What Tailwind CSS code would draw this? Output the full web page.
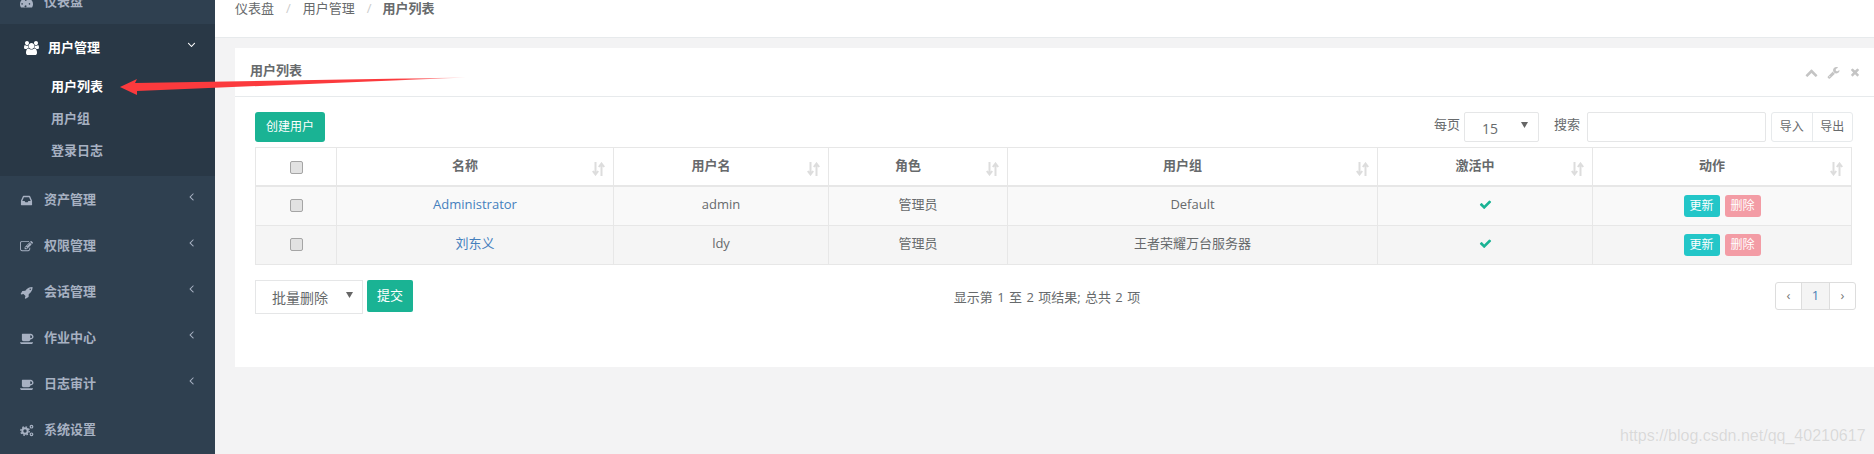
<!DOCTYPE html>
<html lang="zh">
<head>
<meta charset="utf-8">
<title>用户列表</title>
<script src="https://cdn.jsdelivr.net/npm/@tailwindcss/browser@4"></script>
</head>
<body class="bg-[#f3f3f4]">
<div class="relative flex h-[454px] w-[1874px] overflow-hidden bg-[#f3f3f4] text-[13px] text-[#676a6c] [font-family:'Open_Sans','Noto_Sans_CJK_SC',sans-serif]">

  <!-- Sidebar -->
  <nav class="w-[215px] shrink-0 bg-[#2f4050] text-[13px] font-semibold text-[#a7b1c2]">
    <div class="-mt-[22px] flex h-[46px] items-center pl-5 pt-[2px]">
      <svg class="w-[13px] h-[13px] fill-current" viewBox="0 0 1792 1792"><path d="M896 256q244 0 451 120t327 327 120 451q0 220-117 406-16 24-44 24h-1474q-28 0-44-24-117-186-117-406 0-244 120-451t327-327 451-120zm-512 832a96 96 0 1 0 0 1zm512-512a96 96 0 1 0 0 1zm512 512a96 96 0 1 0 0 1zm-512 320a128 128 0 1 0 0 1z" fill-rule="evenodd"/></svg>
      <span class="ml-[11px]">仪表盘</span>
    </div>
    <div class="h-[152px] bg-[#293846]">
      <div class="flex h-[46px] items-center pl-6 pr-[17px] pt-[2px] text-white">
        <svg class="w-[15px] h-[14px] fill-current" viewBox="0 0 1920 1792"><path d="M593 896q-162 5-265 128h-134q-82 0-138-40.5t-56-118.5q0-353 124-353 6 0 43.5 21t97.5 42.5 119 21.5q67 0 133-23-5 37-5 66 0 139 81 256zm1071 637q0 120-73 189.5t-194 69.5h-874q-121 0-194-69.5t-73-189.5q0-53 3.5-103.5t14-109 26.5-108.5 43-97.5 62-81 85.5-53.5 111.5-20q10 0 43 21.5t73 48 107 48 135 21.5 135-21.5 107-48 73-48 43-21.5q61 0 111.5 20t85.5 53.5 62 81 43 97.5 26.5 108.5 14 109 3.5 103.5zm-1024-1277q0 106-75 181t-181 75-181-75-75-181 75-181 181-75 181 75 75 181zm704 384q0 159-112.5 271.5t-271.5 112.5-271.5-112.5-112.5-271.5 112.5-271.5 271.5-112.5 271.5 112.5 112.5 271.5zm576 225q0 78-56 118.5t-138 40.5h-134q-103-123-265-128 81-117 81-256 0-29-5-66 66 23 133 23 59 0 119-21.5t97.5-42.5 43.5-21q124 0 124 353zm-128-609q0 106-75 181t-181 75-181-75-75-181 75-181 181-75 181 75 75 181z"/></svg>
        <span class="ml-[9px] flex-1">用户管理</span>
        <svg class="w-[13px] h-[13px] -mt-[8px] fill-current" viewBox="0 0 1792 1792"><path d="M1395 736q0 13-10 23l-466 466q-10 10-23 10t-23-10l-466-466q-10-10-10-23t10-23l50-50q10-10 23-10t23 10l393 393 393-393q10-10 23-10t23 10l50 50q10 10 10 23z"/></svg>
      </div>
      <div class="flex h-[32.5px] items-center pl-[51px] font-bold text-white">用户列表</div>
      <div class="flex h-[32.5px] items-center pl-[51px]">用户组</div>
      <div class="flex h-[32px] items-center pl-[51px]">登录日志</div>
    </div>
    <div class="flex h-[46px] items-center pl-5 pr-[17px] pt-[2px]">
      <svg class="w-[13px] h-[13px] fill-current" viewBox="0 0 1792 1792"><path d="M1151 960h316q-1-3-2.5-8.5t-2.5-7.5l-212-496h-708l-212 496q-1 2-2.5 7.5t-2.5 8.5h316l95 192h320zm513 30v482q0 26-19 45t-45 19h-1408q-26 0-45-19t-19-45v-482q0-62 25-123l238-552q10-25 36.5-42t52.5-17h832q26 0 52.5 17t36.5 42l238 552q25 61 25 123z"/></svg>
      <span class="ml-[11px] flex-1">资产管理</span>
      <svg class="w-[13px] h-[13px] -mt-[8px] fill-current" viewBox="0 0 1792 1792"><path d="M1203 544q0 13-10 23l-393 393 393 393q10 10 10 23t-10 23l-50 50q-10 10-23 10t-23-10l-466-466q-10-10-10-23t10-23l466-466q10-10 23-10t23 10l50 50q10 10 10 23z"/></svg>
    </div>
    <div class="flex h-[46px] items-center pl-5 pr-[17px] pt-[2px]">
      <svg class="w-[13px] h-[13px] fill-current" viewBox="0 0 1792 1792"><path d="M888 1184l116-116-152-152-116 116v56h96v96h56zm440-720q-16-16-33 1l-350 350q-17 17-1 33t33-1l350-350q17-17 1-33zm80 594v190q0 119-84.5 203.5t-203.5 84.5h-832q-119 0-203.5-84.5t-84.5-203.5v-832q0-119 84.5-203.5t203.5-84.5h832q63 0 117 25 15 7 18 23 3 17-9 29l-49 49q-14 14-32 8-23-6-45-6h-832q-66 0-113 47t-47 113v832q0 66 47 113t113 47h832q66 0 113-47t47-113v-126q0-13 9-22l64-64q15-15 35-7t20 29zm-96-738l288 288-672 672h-288v-288zm444 132l-92 92-288-288 92-92q28-28 68-28t68 28l152 152q28 28 28 68t-28 68z"/></svg>
      <span class="ml-[11px] flex-1">权限管理</span>
      <svg class="w-[13px] h-[13px] -mt-[8px] fill-current" viewBox="0 0 1792 1792"><path d="M1203 544q0 13-10 23l-393 393 393 393q10 10 10 23t-10 23l-50 50q-10 10-23 10t-23-10l-466-466q-10-10-10-23t10-23l466-466q10-10 23-10t23 10l50 50q10 10 10 23z"/></svg>
    </div>
    <div class="flex h-[46px] items-center pl-5 pr-[17px] pt-[2px]">
      <svg class="w-[13px] h-[13px] fill-current" viewBox="0 0 1792 1792"><path d="M1504 448q0-40-28-68t-68-28-68 28-28 68 28 68 68 28 68-28 28-68zm224-288q0 249-75.5 430.5t-253.5 360.5q-81 80-195 176l-20 379q-2 16-16 26l-384 224q-7 4-16 4-12 0-23-9l-64-64q-13-14-8-32l85-276-281-281-276 85q-3 1-9 1-14 0-23-9l-64-64q-17-19-5-39l224-384q10-14 26-16l379-20q96-114 176-195 188-187 358-258t431-71q14 0 24 9.5t10 22.5z"/></svg>
      <span class="ml-[11px] flex-1">会话管理</span>
      <svg class="w-[13px] h-[13px] -mt-[8px] fill-current" viewBox="0 0 1792 1792"><path d="M1203 544q0 13-10 23l-393 393 393 393q10 10 10 23t-10 23l-50 50q-10 10-23 10t-23-10l-466-466q-10-10-10-23t10-23l466-466q10-10 23-10t23 10l50 50q10 10 10 23z"/></svg>
    </div>
    <div class="flex h-[46px] items-center pl-5 pr-[17px] pt-[2px]">
      <svg class="w-[14px] h-[13px] fill-current" viewBox="0 0 1920 1792"><path d="M1664 640q0-80-56-136t-136-56h-64v384h64q80 0 136-56t56-136zm-1664 768h1792q0 106-75 181t-181 75h-1280q-106 0-181-75t-75-181zm1856-768q0 159-112.5 271.5t-271.5 112.5h-64v32q0 92-66 158t-158 66h-704q-92 0-158-66t-66-158v-736q0-26 19-45t45-19h1152q159 0 271.5 112.5t112.5 271.5z"/></svg>
      <span class="ml-[10px] flex-1">作业中心</span>
      <svg class="w-[13px] h-[13px] -mt-[8px] fill-current" viewBox="0 0 1792 1792"><path d="M1203 544q0 13-10 23l-393 393 393 393q10 10 10 23t-10 23l-50 50q-10 10-23 10t-23-10l-466-466q-10-10-10-23t10-23l466-466q10-10 23-10t23 10l50 50q10 10 10 23z"/></svg>
    </div>
    <div class="flex h-[46px] items-center pl-5 pr-[17px] pt-[2px]">
      <svg class="w-[14px] h-[13px] fill-current" viewBox="0 0 1920 1792"><path d="M1664 640q0-80-56-136t-136-56h-64v384h64q80 0 136-56t56-136zm-1664 768h1792q0 106-75 181t-181 75h-1280q-106 0-181-75t-75-181zm1856-768q0 159-112.5 271.5t-271.5 112.5h-64v32q0 92-66 158t-158 66h-704q-92 0-158-66t-66-158v-736q0-26 19-45t45-19h1152q159 0 271.5 112.5t112.5 271.5z"/></svg>
      <span class="ml-[10px] flex-1">日志审计</span>
      <svg class="w-[13px] h-[13px] -mt-[8px] fill-current" viewBox="0 0 1792 1792"><path d="M1203 544q0 13-10 23l-393 393 393 393q10 10 10 23t-10 23l-50 50q-10 10-23 10t-23-10l-466-466q-10-10-10-23t10-23l466-466q10-10 23-10t23 10l50 50q10 10 10 23z"/></svg>
    </div>
    <div class="flex h-[46px] items-center pl-5 pr-[17px] pt-[2px]">
      <svg class="w-[14px] h-[13px]" viewBox="0 0 14 13" fill="none" stroke="currentColor"><circle cx="5" cy="7" r="2.7" stroke-width="2"/><circle cx="5" cy="7" r="4.2" stroke-width="1.4" stroke-dasharray="1.6 1.7"/><circle cx="11.5" cy="2.7" r="1.3" stroke-width="1.2"/><circle cx="11.5" cy="10.3" r="1.3" stroke-width="1.2"/></svg>
      <span class="ml-[10px] flex-1">系统设置</span>
    </div>
  </nav>

  <!-- Main -->
  <main class="flex-1 min-w-0">
    <div class="flex h-[38px] items-start border-b border-[#e7eaec] bg-white pl-5 text-[13px] leading-[16px]">
      <span>仪表盘</span><span class="mx-[12px] text-[#ccc]">/</span>
      <span>用户管理</span><span class="ml-[12px] mr-[11px] text-[#ccc]">/</span>
      <span class="font-bold">用户列表</span>
    </div>

    <section class="ml-5 mt-[10px] h-[319px] bg-white">
      <header class="flex h-[49px] items-center justify-between border-b border-[#e7eaec] pl-[15px] pr-[13px]">
        <h2 class="text-[13px] font-bold -mt-[3px]">用户列表</h2>
        <div class="flex items-center gap-[9px] text-[#c4c4c4]">
          <svg class="w-[13px] h-[13px] fill-current" viewBox="0 0 1792 1792"><path d="M1683 1331l-166 165q-19 19-45 19t-45-19l-531-531-531 531q-19 19-45 19t-45-19l-166-165q-19-19-19-45.5t19-45.5l742-741q19-19 45-19t45 19l742 741q19 19 19 45.5t-19 45.5z"/></svg>
          <svg class="w-[13px] h-[13px] fill-current" viewBox="0 0 1792 1792"><path d="M448 1472q0-26-19-45t-45-19-45 19-19 45 19 45 45 19 45-19 19-45zm644-420l-682 682q-37 37-90 37-52 0-91-37l-106-108q-38-36-38-90 0-53 38-91l681-681q39 98 114.5 173.5t173.5 114.5zm634-435q0 39-23 106-47 134-164.5 217.5t-258.5 83.5q-185 0-316.5-131.5t-131.5-316.5 131.5-316.5 316.5-131.5q58 0 121.5 16.5t107.5 46.5q16 11 16 28t-16 28l-293 169v224l193 106q5-3 79-48.5t135.5-81 70.5-35.5q15 0 23.5 10t8.5 25z"/></svg>
          <svg class="w-[12px] h-[12px] fill-current" viewBox="0 0 1792 1792"><path d="M1490 1322q0 40-28 68l-136 136q-28 28-68 28t-68-28l-294-294-294 294q-28 28-68 28t-68-28l-136-136q-28-28-28-68t28-68l294-294-294-294q-28-28-28-68t28-68l136-136q28-28 68-28t68 28l294 294 294-294q28-28 68-28t68 28l136 136q28 28 28 68t-28 68l-294 294 294 294q28 28 28 68z"/></svg>
        </div>
      </header>

      <div class="pl-5 pr-[21px] pt-[15px]">
        <!-- Toolbar -->
        <div class="flex h-[30px] items-center">
          <button class="h-[30px] w-[70px] rounded-[3px] bg-[#1ab394] text-[12px] text-white">创建用户</button>
          <div class="ml-auto flex items-center">
            <span class="-mt-[4px]">每页</span>
            <div class="ml-1 flex h-[30px] w-[75px] items-center justify-between rounded-[2px] border border-[#e5e6e7] pl-[17px] pr-[10px] text-[14px]">
              <span class="mt-[2px]">15</span>
              <svg class="-mt-[4px] w-[7px] h-[6px] fill-[#666]" viewBox="0 0 7 6"><path d="M0 0h7L3.5 6z"/></svg>
            </div>
            <span class="-mt-[4px] ml-[15px]">搜索</span>
            <input type="text" aria-label="搜索" class="ml-[7px] h-[30px] w-[179px] rounded-[2px] border border-[#e5e6e7] bg-white">
            <div class="ml-[5px] flex h-[30px] w-[82px] rounded-[3px] border border-[#e7eaec] text-[12px]">
              <span class="flex flex-1 items-center justify-center border-r border-[#e7eaec]">导入</span>
              <span class="flex flex-1 items-center justify-center">导出</span>
            </div>
          </div>
        </div>

        <!-- Table -->
        <table class="mt-[5px] w-[1596px] table-fixed border-collapse text-center">
          <colgroup>
            <col class="w-[81px]"><col class="w-[277px]"><col class="w-[215px]"><col class="w-[179px]"><col class="w-[370px]"><col class="w-[215px]"><col class="w-[259px]">
          </colgroup>
          <thead>
            <tr class="h-[38px]">
              <th class="border border-b-2 border-[#e7e7e7] pb-[2px]"><input type="checkbox" aria-label="全选" class="mt-[3px] size-[13px] appearance-none rounded-[2px] border border-[#a5a5a5] bg-[#e2e2e2] align-middle"></th>
              <th class="relative border border-b-2 border-[#e7e7e7] pb-[2px] pr-5 font-bold">名称<svg class="absolute right-[8px] top-[14px] w-[13px] h-[14px] text-[#ddd]" viewBox="0 0 13 14" fill="none" stroke="currentColor" stroke-width="2"><path d="M3.5 0v12M.8 9l2.7 3.5L6.2 9M9.5 14V2M6.8 5l2.7-3.5L12.2 5"/></svg></th>
              <th class="relative border border-b-2 border-[#e7e7e7] pb-[2px] pr-5 font-bold">用户名<svg class="absolute right-[8px] top-[14px] w-[13px] h-[14px] text-[#ddd]" viewBox="0 0 13 14" fill="none" stroke="currentColor" stroke-width="2"><path d="M3.5 0v12M.8 9l2.7 3.5L6.2 9M9.5 14V2M6.8 5l2.7-3.5L12.2 5"/></svg></th>
              <th class="relative border border-b-2 border-[#e7e7e7] pb-[2px] pr-5 font-bold">角色<svg class="absolute right-[8px] top-[14px] w-[13px] h-[14px] text-[#ddd]" viewBox="0 0 13 14" fill="none" stroke="currentColor" stroke-width="2"><path d="M3.5 0v12M.8 9l2.7 3.5L6.2 9M9.5 14V2M6.8 5l2.7-3.5L12.2 5"/></svg></th>
              <th class="relative border border-b-2 border-[#e7e7e7] pb-[2px] pr-5 font-bold">用户组<svg class="absolute right-[8px] top-[14px] w-[13px] h-[14px] text-[#ddd]" viewBox="0 0 13 14" fill="none" stroke="currentColor" stroke-width="2"><path d="M3.5 0v12M.8 9l2.7 3.5L6.2 9M9.5 14V2M6.8 5l2.7-3.5L12.2 5"/></svg></th>
              <th class="relative border border-b-2 border-[#e7e7e7] pb-[2px] pr-5 font-bold">激活中<svg class="absolute right-[8px] top-[14px] w-[13px] h-[14px] text-[#ddd]" viewBox="0 0 13 14" fill="none" stroke="currentColor" stroke-width="2"><path d="M3.5 0v12M.8 9l2.7 3.5L6.2 9M9.5 14V2M6.8 5l2.7-3.5L12.2 5"/></svg></th>
              <th class="relative border border-b-2 border-[#e7e7e7] pb-[2px] pr-5 font-bold">动作<svg class="absolute right-[8px] top-[14px] w-[13px] h-[14px] text-[#ddd]" viewBox="0 0 13 14" fill="none" stroke="currentColor" stroke-width="2"><path d="M3.5 0v12M.8 9l2.7 3.5L6.2 9M9.5 14V2M6.8 5l2.7-3.5L12.2 5"/></svg></th>
            </tr>
          </thead>
          <tbody>
            <tr class="h-[40px] bg-[#f9f9f9]">
              <td class="border border-[#e7e7e7] pb-[3px]"><input type="checkbox" aria-label="选择" class="size-[13px] appearance-none rounded-[2px] border border-[#a5a5a5] bg-[#e2e2e2] align-middle"></td>
              <td class="border border-[#e7e7e7] pb-[3px] text-[#4580bd]">Administrator</td>
              <td class="border border-[#e7e7e7] pb-[3px]">admin</td>
              <td class="border border-[#e7e7e7] pb-[3px]">管理员</td>
              <td class="border border-[#e7e7e7] pb-[3px]">Default</td>
              <td class="border border-[#e7e7e7]"><svg class="mx-auto -mt-[3px] w-[13px] h-[13px] fill-[#1ab394]" viewBox="0 0 1792 1792"><path d="M1671 566q0 40-28 68l-724 724-136 136q-28 28-68 28t-68-28l-136-136-362-362q-28-28-28-68t28-68l136-136q28-28 68-28t68 28l294 295 656-657q28-28 68-28t68 28l136 136q28 28 28 68z"/></svg></td>
              <td class="border border-[#e7e7e7]"><div class="flex justify-center gap-[5px]"><span class="flex h-[22px] w-[36px] items-center justify-center rounded-[3px] bg-[#23c6c8] text-[12px] text-white">更新</span><span class="flex h-[22px] w-[36px] items-center justify-center rounded-[3px] bg-[#f39ca5] text-[12px] text-white">删除</span></div></td>
            </tr>
            <tr class="h-[39px] bg-[#f5f5f5]">
              <td class="border border-[#e7e7e7] pb-[3px]"><input type="checkbox" aria-label="选择" class="size-[13px] appearance-none rounded-[2px] border border-[#a5a5a5] bg-[#e2e2e2] align-middle"></td>
              <td class="border border-[#e7e7e7] pb-[3px] text-[#4580bd]">刘东义</td>
              <td class="border border-[#e7e7e7] pb-[3px]">ldy</td>
              <td class="border border-[#e7e7e7] pb-[3px]">管理员</td>
              <td class="border border-[#e7e7e7] pb-[3px]">王者荣耀万台服务器</td>
              <td class="border border-[#e7e7e7]"><svg class="mx-auto -mt-[3px] w-[13px] h-[13px] fill-[#1ab394]" viewBox="0 0 1792 1792"><path d="M1671 566q0 40-28 68l-724 724-136 136q-28 28-68 28t-68-28l-136-136-362-362q-28-28-28-68t28-68l136-136q28-28 68-28t68 28l294 295 656-657q28-28 68-28t68 28l136 136q28 28 28 68z"/></svg></td>
              <td class="border border-[#e7e7e7]"><div class="flex justify-center gap-[5px]"><span class="flex h-[22px] w-[36px] items-center justify-center rounded-[3px] bg-[#23c6c8] text-[12px] text-white">更新</span><span class="flex h-[22px] w-[36px] items-center justify-center rounded-[3px] bg-[#f39ca5] text-[12px] text-white">删除</span></div></td>
            </tr>
          </tbody>
        </table>

        <!-- Footer row -->
        <div class="mt-[15px] grid grid-cols-[1fr_auto_1fr] items-start">
          <div class="flex items-start">
            <div class="flex h-[34px] w-[108px] items-center justify-between border border-[#e5e6e7] pl-[16px] pr-[9px] text-[14px]">
              <span class="mt-[1px]">批量删除</span>
              <svg class="-mt-[5px] w-[7px] h-[6px] fill-[#666]" viewBox="0 0 7 6"><path d="M0 0h7L3.5 6z"/></svg>
            </div>
            <button class="ml-[4px] h-[32px] w-[46px] rounded-[2px] bg-[#1ab394] text-[13px] text-white">提交</button>
          </div>
          <div class="-ml-[14px] pt-[8px] text-[13px] leading-[18px] [word-spacing:1px]">显示第 1 至 2 项结果; 总共 2 项</div>
          <div class="ml-auto mt-[2px] -mr-[3px] flex h-[28px] w-[81px] rounded-[3px] border border-[#ddd] text-[13px]">
            <span class="flex w-[25px] items-center justify-center text-[#777]">‹</span>
            <span class="flex w-[29px] items-center justify-center border-x border-[#ddd] bg-[#f4f4f4] text-[#4a7fb5]">1</span>
            <span class="flex flex-1 items-center justify-center text-[#777]">›</span>
          </div>
        </div>
      </div>
    </section>
  </main>

  <!-- Annotation arrow laid over the screenshot -->
  <svg class="pointer-events-none absolute left-0 top-0" width="480" height="110" viewBox="0 0 480 110">
    <defs>
      <linearGradient id="arrowFade" gradientUnits="userSpaceOnUse" x1="120" y1="0" x2="466" y2="0">
        <stop offset="0" stop-color="#fb3a3d"/>
        <stop offset="0.8" stop-color="#fb3a3d"/>
        <stop offset="1" stop-color="#fb3a3d" stop-opacity="0.25"/>
      </linearGradient>
    </defs>
    <polygon points="120,87 137,79 135,83 466,77.5 137,91 137,95" fill="url(#arrowFade)"/>
  </svg>

  <!-- Watermark -->
  <span class="pointer-events-none absolute left-[1620px] top-[425px] text-[16px] leading-[22px] text-[#d9d9d9] [font-family:'Liberation_Sans',sans-serif] [text-shadow:0_0_1px_rgba(255,255,255,0.9)]">https://blog.csdn.net/qq_40210617</span>
</div>
</body>
</html>
